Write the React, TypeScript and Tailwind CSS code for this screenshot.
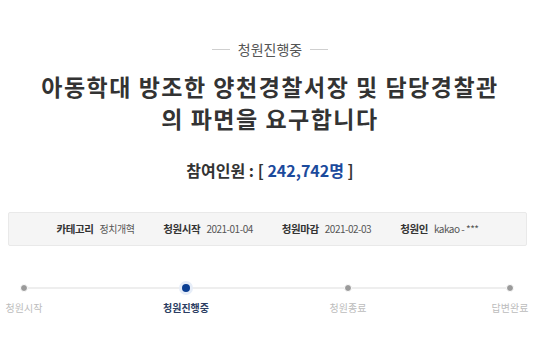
const steps = [
  { label: '청원시작', active: false },
  { label: '청원진행중', active: true },
  { label: '청원종료', active: false },
  { label: '답변완료', active: false },
];

const info = [
  { label: '카테고리', value: '정치개혁' },
  { label: '청원시작', value: '2021-01-04' },
  { label: '청원마감', value: '2021-02-03' },
  { label: '청원인', value: 'kakao - ***' },
];

export default function App() {
  return (
    <div
      className="h-[360px] w-[540px] overflow-hidden bg-white"
      style={{ fontFamily: '"Noto Sans CJK KR", "Noto Sans", sans-serif' }}
    >
      <div className="flex items-center justify-center gap-2 pt-[39px]">
        <span className="h-px w-[18px] bg-[#cfcfcf]" />
        <span className="text-[14px] leading-[20px] text-[#555]">청원진행중</span>
        <span className="h-px w-[18px] bg-[#cfcfcf]" />
      </div>

      <h1 className="mt-[11px] text-center text-[23px] font-bold leading-[32px] tracking-[1.5px] text-[#333]">
        아동학대 방조한 양천경찰서장 및 담당경찰관
        <br />
        의 파면을 요구합니다
      </h1>

      <p className="mt-[25px] text-center text-[16px] font-bold leading-[22px] text-[#333]">
        참여인원 : [ <span className="text-[#1b4a9c]">242,742명</span> ]
      </p>

      <div className="mx-[8px] mt-[31px] flex h-[34px] w-[519px] items-center justify-center gap-[29px] rounded-[2px] border border-[#e9e9e9] bg-[#f5f5f5]">
        {info.map((item) => (
          <div key={item.label} className="flex items-center gap-[6px] leading-[14px]">
            <span className="text-[10.5px] font-bold tracking-[-0.4px] text-[#333]">{item.label}</span>
            <span className="text-[10px] tracking-[-0.5px] text-[#555]">{item.value}</span>
          </div>
        ))}
      </div>

      <div className="relative mr-[6px] mt-[38px] flex justify-between">
        <div className="absolute left-[24px] right-[24px] top-[3px] h-[2px] bg-[#eeeeee]" />
        {steps.map((step) => (
          <div key={step.label} className="relative flex w-[48px] flex-col items-center">
            {step.active ? (
              <span className="h-[8px] w-[8px] rounded-full bg-[#0b3f93] shadow-[0_0_0_3px_#e6edf8]" />
            ) : (
              <span className="h-[8px] w-[8px] rounded-full border border-white bg-[#9a9a9a]" />
            )}
            <span
              className={`mt-[9px] whitespace-nowrap text-[10px] leading-[14px] ${
                step.active ? 'font-bold text-[#2c3e63]' : 'text-[#bcbcbc]'
              }`}
            >
              {step.label}
            </span>
          </div>
        ))}
      </div>
    </div>
  );
}
